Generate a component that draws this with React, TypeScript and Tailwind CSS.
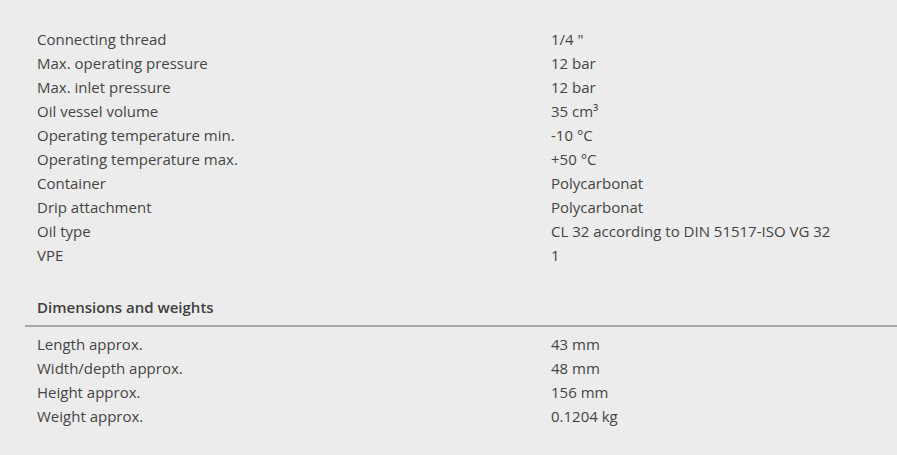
import React from 'react';

const techRows: [string, string][] = [
	['Connecting thread', '1/4 "'],
	['Max. operating pressure', '12 bar'],
	['Max. inlet pressure', '12 bar'],
	['Oil vessel volume', '35 cm³'],
	['Operating temperature min.', '-10 °C'],
	['Operating temperature max.', '+50 °C'],
	['Container', 'Polycarbonat'],
	['Drip attachment', 'Polycarbonat'],
	['Oil type', 'CL 32 according to DIN 51517-ISO VG 32'],
	['VPE', '1'],
];

const dimensionRows: [string, string][] = [
	['Length approx.', '43 mm'],
	['Width/depth approx.', '48 mm'],
	['Height approx.', '156 mm'],
	['Weight approx.', '0.1204 kg'],
];

const Row = ({ label, value }: { label: string; value: string }) => (
	<div className="flex h-6 items-center">
		<div className="w-[514px] shrink-0">{label}</div>
		<div>{value}</div>
	</div>
);

export default function App() {
	return (
		<div
			className="min-h-screen bg-[#ececec] text-[15px] text-[#454545] pt-[27px] pl-[25px]"
			style={{ fontFamily: '"Open Sans", "Noto Sans", sans-serif' }}
		>
			{/* Technical data */}
			<div className="pl-3">
				{techRows.map(([label, value]) => (
					<Row key={label} label={label} value={value} />
				))}
			</div>

			{/* Dimensions and weights */}
			<div className="mt-7 border-b-2 border-[#a9a9a9] pb-[6px] pl-3">
				<div className="flex h-6 items-center font-semibold text-[#404040]">Dimensions and weights</div>
			</div>
			<div className="pt-[5px] pl-3">
				{dimensionRows.map(([label, value]) => (
					<Row key={label} label={label} value={value} />
				))}
			</div>
		</div>
	);
}
